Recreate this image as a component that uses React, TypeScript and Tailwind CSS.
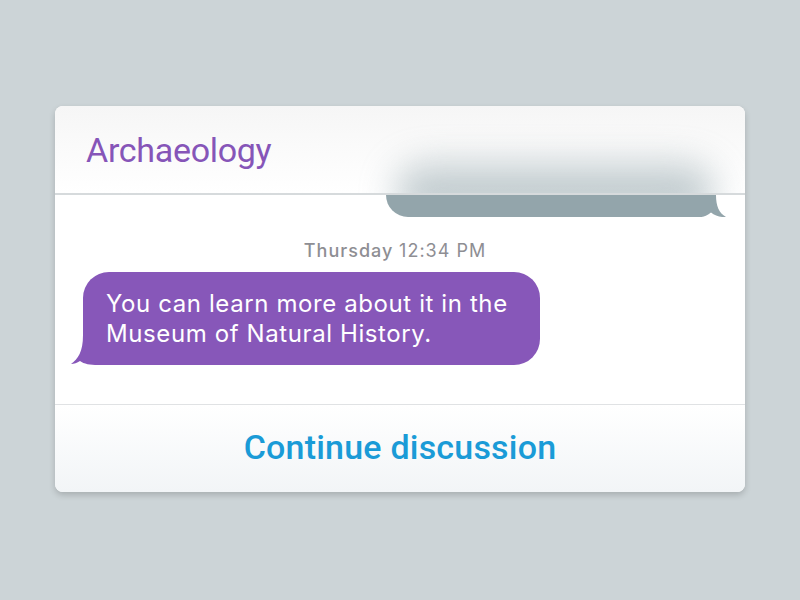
export default function App() {
  return (
    <div className="w-[800px] h-[600px] bg-[#ccd4d7] flex items-center justify-center font-['Roboto',sans-serif]">
      <div className="w-[690px] h-[386px] -mt-[2px] bg-white rounded-[8px] shadow-[0_3px_6px_rgba(0,0,0,0.18)] flex flex-col overflow-hidden">
        {/* frosted header */}
        <div className="relative h-[89px] shrink-0 overflow-hidden bg-gradient-to-b from-[#f6f6f6] to-white border-b-2 border-[#d6dadc]">
          <div className="absolute left-[340px] top-[58px] w-[320px] h-[60px] rounded-full bg-[#93a5ab] opacity-55 blur-[18px]" />
          <div className="relative pl-[31px] pt-[24px] text-[34px] leading-[40px] text-[#8655b8] font-normal tracking-[-0.3px]">
            Archaeology
          </div>
        </div>

        <div className="flex-1 flex flex-col">
          {/* outgoing bubble, mostly scrolled under the header */}
          <div className="relative self-end mr-[43px] w-[316px] h-[22px] bg-[#93a5ab] rounded-bl-[22px]">
            <svg className="absolute -right-[24px] top-0" width="26" height="22" viewBox="0 0 26 22">
              <path d="M0 0 H16 C16 11 19 18 26 22 C21 22.5 15 21 11 17.5 C8 20 4 22 0 22 Z" fill="#93a5ab" />
            </svg>
          </div>

          <div className="mt-[23px] pr-[10px] text-center text-[18px] leading-[22px] tracking-[1px] text-[#8e8e93] font-['Inter',sans-serif] font-medium">
            Thursday <span className="font-normal">12:34 PM</span>
          </div>

          {/* incoming bubble */}
          <div className="relative ml-[28px] mt-[10px] w-[457px] h-[93px] bg-[#8757b9] rounded-[26px] px-[23px] pt-[17px] text-[24px] leading-[30px] tracking-[0.6px] text-white font-['Inter',sans-serif]">
            <svg className="absolute -left-[13px] bottom-0" width="42" height="35" viewBox="0 0 42 35">
              <path d="M13 0 H42 V35 H28 C20 35 14 34 10 31 C7 33 4 34 1 34 C8 29 13 22 13 5 Z" fill="#8757b9" />
            </svg>
            <span className="relative">You can learn more about it in the Museum of Natural History.</span>
          </div>
        </div>

        <div className="h-[88px] shrink-0 border-t border-[#e0e2e4] bg-gradient-to-b from-white to-[#f2f5f7] flex items-center justify-center pb-[4px]">
          <span className="text-[34px] leading-[40px] font-medium text-[#1a9bd7] tracking-[0.2px]">Continue discussion</span>
        </div>
      </div>
    </div>
  );
}
